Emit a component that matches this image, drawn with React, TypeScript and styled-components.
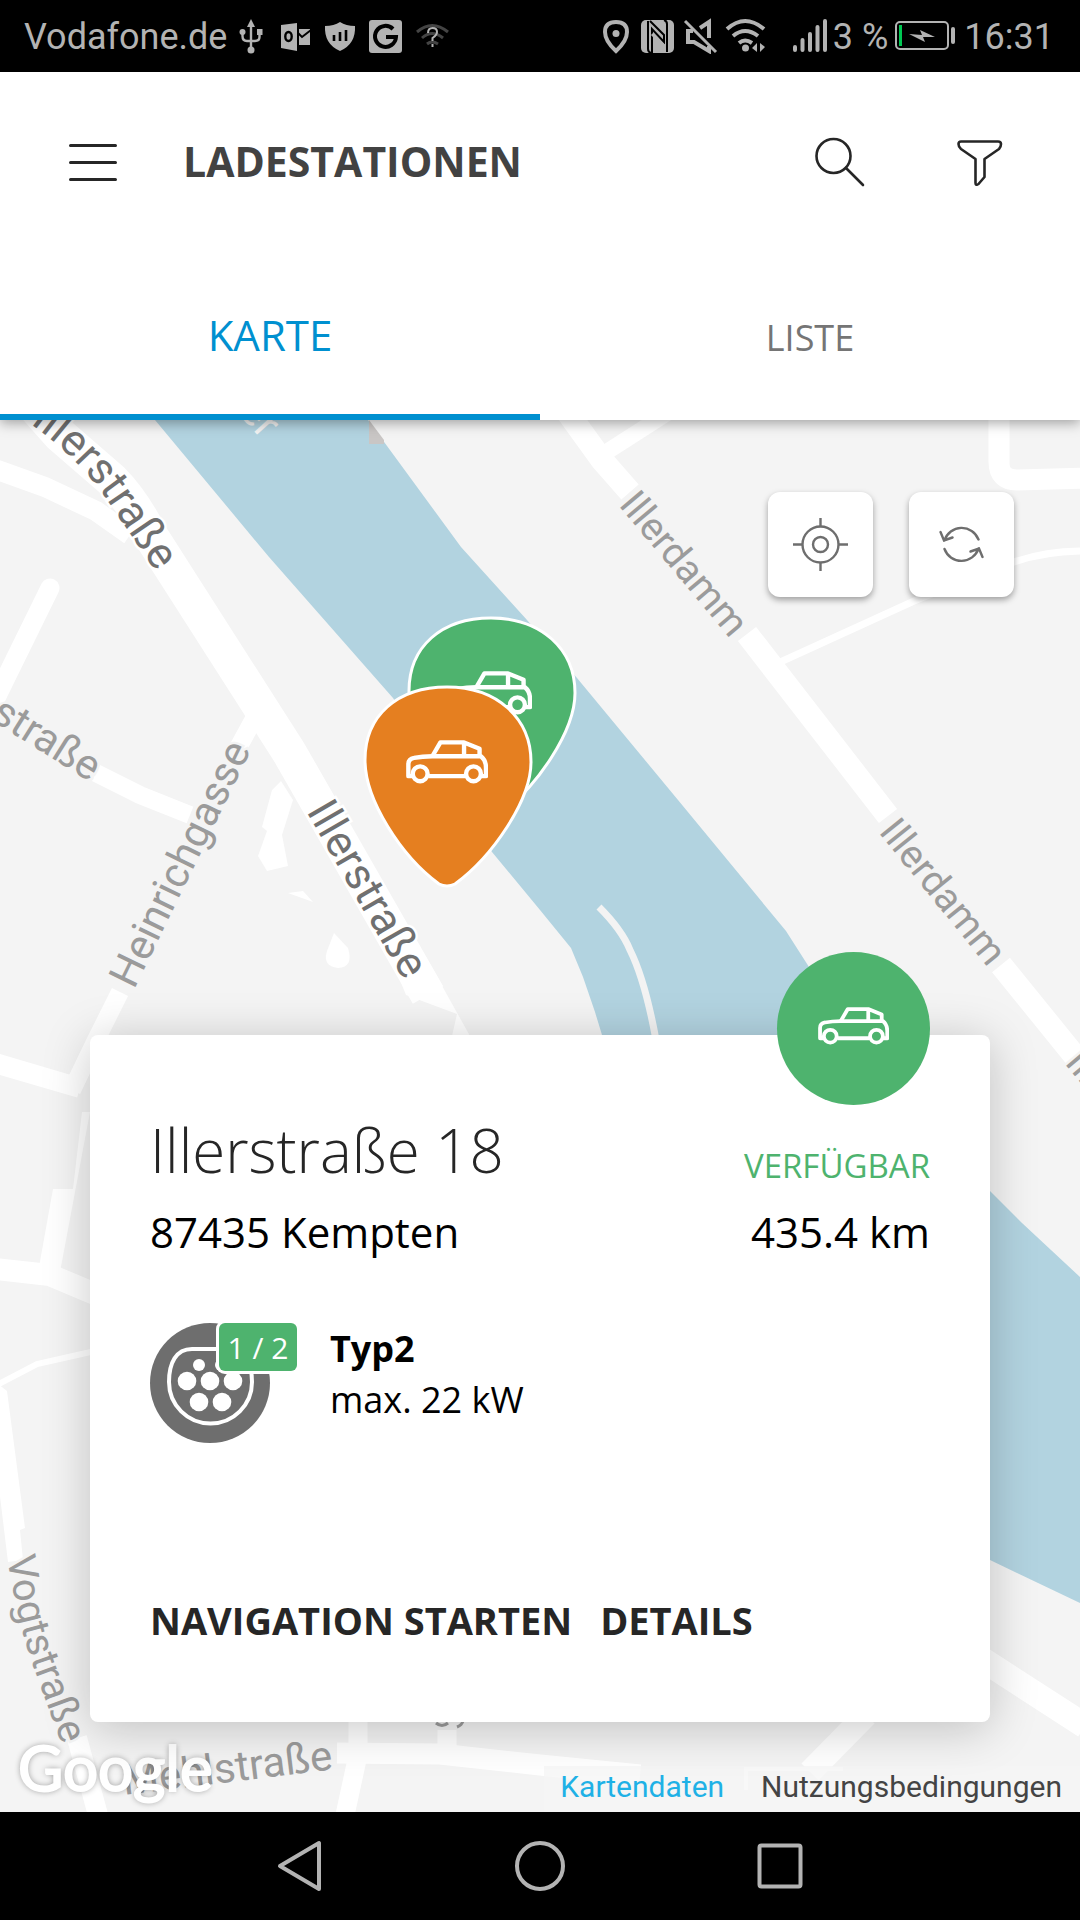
import React from "react";
import styled, { createGlobalStyle } from "styled-components";

const color = {
  accent: "#0090d0",
  available: "#4eb36e",
  occupied: "#e57f20",
  ink: "#262626",
  title: "#424242",
  muted: "#757575",
  system: "#b3b3b3",
  land: "#f4f4f4",
  water: "#b2d3e0",
};

const sans = `"Open Sans", "Noto Sans", sans-serif`;
const roboto = `Roboto, "Noto Sans", sans-serif`;

const GlobalStyle = createGlobalStyle`
  *, *::before, *::after { box-sizing: border-box; }
  body { margin: 0; background: #000; font-family: ${sans}; }
  button { margin: 0; padding: 0; border: 0; background: none; font: inherit; color: inherit; cursor: pointer; }
  h1, h2, p { margin: 0; }
  svg { display: block; }
`;

const Screen = styled.div`
  display: flex;
  flex-direction: column;
  min-height: 100vh;
`;

/* ---------- system bars ---------- */

const StatusBar = styled.div`
  display: flex;
  justify-content: space-between;
  align-items: center;
  height: 72px;
  padding: 0 26px 0 24px;
  background: #000;
  color: ${color.system};
  font-family: ${roboto};
`;

const StatusGroup = styled.div<{ $gap: number }>`
  display: flex;
  align-items: center;
  gap: ${(p) => p.$gap}px;
`;

const StatusText = styled.span`
  padding-top: 2px;
  font-size: 36px;
  line-height: 48px;
`;

const NavBar = styled.nav`
  display: flex;
  justify-content: center;
  align-items: center;
  gap: 180px;
  height: 108px;
  background: #000;
`;

/* ---------- app header ---------- */

const Header = styled.header`
  position: relative;
  z-index: 2;
  background: #fff;
  box-shadow: 0 3px 12px rgba(0, 0, 0, 0.35);
`;

const Toolbar = styled.div`
  display: flex;
  align-items: center;
  height: 180px;
  padding: 0 76px 0 69px;
`;

const PageTitle = styled.h1`
  flex: 1;
  margin-left: 66px;
  padding-bottom: 2px;
  color: ${color.title};
  font-size: 41px;
  font-weight: 700;
  line-height: 60px;
`;

const ToolbarActions = styled.div`
  display: flex;
  gap: 92px;
`;

const Tabs = styled.div`
  display: grid;
  grid-template-columns: 1fr 1fr;
  height: 168px;
`;

const Tab = styled.button<{ $active?: boolean }>`
  padding: ${(p) => (p.$active ? "0 0 3px" : "2px 0 0")};
  color: ${(p) => (p.$active ? color.accent : color.muted)};
  font-size: ${(p) => (p.$active ? 42 : 36)}px;
  box-shadow: ${(p) => (p.$active ? `inset 0 -6px ${color.accent}` : "none")};
`;

/* ---------- map ---------- */

const MapArea = styled.main`
  position: relative;
  flex: 1;
  display: flex;
  flex-direction: column;
  justify-content: space-between;
  overflow: hidden;
  background: ${color.land};
`;

const MapDrawing = styled.svg`
  position: absolute;
  inset: 0;
  width: 100%;
  height: 100%;
  font-family: ${roboto};
`;

const Pin = styled.button<{ $x: number; $y: number }>`
  position: absolute;
  left: ${(p) => p.$x}px;
  top: ${(p) => p.$y}px;
`;

const MapControls = styled.div`
  position: relative;
  display: flex;
  justify-content: flex-end;
  gap: 36px;
  padding: 72px 66px;
`;

const MapButton = styled.button`
  display: grid;
  place-items: center;
  width: 105px;
  height: 105px;
  border-radius: 12px;
  background: #fff;
  box-shadow: 0 3px 6px rgba(0, 0, 0, 0.35);
`;

const MapFooter = styled.footer`
  position: absolute;
  left: 0;
  right: 0;
  bottom: 0;
  display: flex;
  justify-content: space-between;
  align-items: flex-end;
  padding-left: 18px;
  font-family: ${roboto};
`;

const GoogleMark = styled.span`
  color: #fff;
  font-family: Lato, sans-serif;
  font-size: 62px;
  line-height: 90px;
  -webkit-text-stroke: 2px #fff;
  text-shadow: 0 0 6px rgba(0, 0, 0, 0.45);
`;

const Attribution = styled.div`
  display: flex;
  gap: 37px;
  padding: 0 18px 4px 16px;
  background: rgba(245, 245, 245, 0.75);
`;

const AttributionLink = styled.a<{ $highlight?: boolean }>`
  color: ${(p) => (p.$highlight ? "#1fb1e6" : "#444")};
  font-size: 30px;
  line-height: 42px;
  text-decoration: none;
`;

/* ---------- station card ---------- */

const Card = styled.section`
  position: relative;
  margin: 0 90px 90px;
  padding: 75px 60px 78px;
  border-radius: 8px;
  background: #fff;
  box-shadow: 0 6px 48px rgba(0, 0, 0, 0.22);
`;

const CardBadge = styled.div`
  position: absolute;
  top: -83px;
  right: 60px;
  display: grid;
  place-items: center;
  width: 153px;
  height: 153px;
  padding-bottom: 6px;
  border-radius: 50%;
  background: ${color.available};
`;

const Summary = styled.div`
  display: flex;
  justify-content: space-between;
  align-items: flex-end;
`;

const SummaryColumn = styled.div<{ $end?: boolean }>`
  display: flex;
  flex-direction: column;
  gap: 12px;
  text-align: ${(p) => (p.$end ? "right" : "left")};
`;

const Street = styled.h2`
  color: ${color.ink};
  font-size: 60px;
  font-weight: 300;
  line-height: 80px;
`;

const Detail = styled.p`
  color: #000;
  font-size: 42px;
  line-height: 60px;
`;

const Availability = styled.p`
  color: ${color.available};
  font-size: 33px;
  line-height: 48px;
`;

const Connector = styled.div`
  display: flex;
  gap: 60px;
  margin-top: 61px;
`;

const ConnectorIcon = styled.div`
  position: relative;
  width: 120px;
  height: 120px;
`;

const ConnectorCount = styled.span`
  position: absolute;
  top: 0;
  left: 69px;
  width: 78px;
  height: 48px;
  border-radius: 6px;
  background: ${color.available};
  box-shadow: 0 0 0 3px #fff;
  color: #fff;
  font-size: 30px;
  line-height: 49px;
  text-align: center;
  white-space: nowrap;
`;

const ConnectorText = styled.p<{ $strong?: boolean }>`
  color: #000;
  font-size: 36px;
  font-weight: ${(p) => (p.$strong ? 700 : 400)};
  line-height: 51px;
`;

const CardActions = styled.div`
  display: flex;
  gap: 28px;
  margin-top: 153px;
`;

const CardAction = styled.button`
  color: ${color.ink};
  font-size: 38px;
  font-weight: 700;
  line-height: 48px;
`;

/* ---------- icons ---------- */

const CarIcon = ({ width }: { width: number }) => (
  <svg
    width={width}
    height={Math.round((width * 130) / 243)}
    viewBox="0 0 243 130"
    fill="none"
    stroke="#fff"
    strokeWidth="13"
    strokeLinejoin="round"
  >
    <path d="M22 107H7V72Q7 56 24 53Q48 48 78 48H222Q237 60 237 82V107H222" />
    <path d="M66 107H176M78 48L102 7H172L218 26V48M172 7V48" />
    <circle cx="42" cy="100" r="22" />
    <circle cx="200" cy="100" r="22" />
  </svg>
);

const PinShape = ({ fill }: { fill: string }) => (
  <svg width="168" height="201" viewBox="0 0 168 201" overflow="visible">
    <path
      d="M83 1C133 1 167 32 167 76C167 114 129 170 91 198Q83 202 75 198C37 170 1 114 1 74C1 30 33 1 83 1Z"
      fill={fill}
      stroke="#fff"
      strokeWidth="3"
    />
    <svg x="42" y="54" width="82" height="44" overflow="visible">
      <CarIcon width={82} />
    </svg>
  </svg>
);

const MenuIcon = () => (
  <svg width="48" height="48" viewBox="0 0 48 48" stroke={color.ink} strokeWidth="3" strokeLinecap="round">
    <path d="M1.500 7.500H46.500M1.500 24.500H46.500M1.500 41.500H46.500" />
  </svg>
);

const SearchIcon = () => (
  <svg width="48" height="48" viewBox="0 0 48 48" fill="none" stroke={color.ink} strokeWidth="2.600" strokeLinecap="round" overflow="visible">
    <circle cx="17.500" cy="18" r="17" />
    <path d="M30 30L47 47" />
  </svg>
);

const FilterIcon = () => (
  <svg width="48" height="48" viewBox="0 0 48 48" fill="none" stroke={color.ink} strokeWidth="2.600" strokeLinejoin="round">
    <path d="M5 3.500H42Q45 3.500 45 6Q45 9 43 11L28.500 21V39L22.500 46Q19.500 48 19.500 45V21L5 11Q2.500 9 2.500 6Q2.500 3.500 5 3.500Z" />
  </svg>
);

const LocateIcon = () => (
  <svg width="57" height="57" viewBox="0 0 57 57" fill="none" stroke="#6e6e6e" strokeWidth="2.400">
    <circle cx="28.500" cy="28.500" r="18" />
    <circle cx="28.500" cy="28.500" r="7.500" />
    <path d="M28.500 2V11M28.500 46V55M1 28.500H10M47 28.500H56" />
  </svg>
);

const RefreshIcon = () => (
  <svg width="45" height="45" viewBox="0 0 45 45" fill="none" stroke="#6e6e6e" strokeWidth="2.400" strokeLinecap="round">
    <path d="M5.500 18.500A18 18 0 0 1 39.500 17.500M1.500 10L5 18.500L13.500 15.500" />
    <path d="M5.500 27A18 18 0 0 0 39.500 26.500M43.500 35L40 26.500L31.500 29.500" />
  </svg>
);

const PlugIcon = () => (
  <svg width="120" height="120" viewBox="0 0 120 120">
    <circle cx="60" cy="60" r="60" fill="#6e6e6e" />
    <path
      d="M42 26H78C94 26 102 40 102 59A41.500 41.500 0 0 1 19 59C19 40 26 26 42 26Z"
      fill="none"
      stroke="#fff"
      strokeWidth="4"
    />
    <g fill="#fff">
      <circle cx="49" cy="42" r="6" />
      <circle cx="71" cy="42" r="6" />
      <circle cx="37" cy="58" r="9.300" />
      <circle cx="60" cy="58" r="9.300" />
      <circle cx="83" cy="58" r="9.300" />
      <circle cx="49" cy="79" r="9.300" />
      <circle cx="72" cy="79" r="9.300" />
    </g>
  </svg>
);

type StatusIconProps = { width: number; children: React.ReactNode };

const StatusIcon = ({ width, children }: StatusIconProps) => (
  <svg width={width} height="36" viewBox={`0 0 ${width} 36`} fill={color.system}>
    {children}
  </svg>
);

const UsbIcon = () => (
  <StatusIcon width={24}>
    <path d="M12 1L16 9H8Z" />
    <circle cx="12" cy="32" r="3.500" />
    <circle cx="3.500" cy="14" r="3" />
    <rect x="18" y="11" width="5.500" height="6" />
    <path d="M12 8V30M3.500 14V18Q3.500 23 8 23H16Q20.500 23 20.500 19V15" fill="none" stroke={color.system} strokeWidth="2.400" />
  </StatusIcon>
);

const OutlookIcon = () => (
  <StatusIcon width={36}>
    <path d="M6 7L22 5V33L6 30Z" />
    <path d="M24 11H35V27H24Z" />
    <path d="M23 15L27 19L36 12" fill="none" stroke="#000" strokeWidth="2" />
    <ellipse cx="13.500" cy="18.500" rx="3.200" ry="4.500" fill="none" stroke="#000" strokeWidth="2.400" />
  </StatusIcon>
);

const ShieldIcon = () => (
  <StatusIcon width={33}>
    <path d="M17 4Q23 8 32 8Q33 26 17 33Q1 26 2 8Q11 8 17 4Z" />
    <path d="M11 17V23M17 14V23M23 12V23" stroke="#000" strokeWidth="2.600" />
  </StatusIcon>
);

const GBoxIcon = () => (
  <StatusIcon width={36}>
    <rect x="1" y="2" width="33" height="33" rx="3" />
    <path d="M25 11A10.500 10.500 0 1 0 28 19H18" fill="none" stroke="#000" strokeWidth="4" />
  </StatusIcon>
);

const WifiUnknownIcon = () => (
  <StatusIcon width={36}>
    <g fill="none" stroke="#444" strokeWidth="3">
      <path d="M1 14Q16 1 32 14M6 20Q16 11 27 20M11 26Q16 22 22 26" />
    </g>
    <path d="M12 15Q12 10 16.500 10Q21 10 21 14Q21 17 16.500 20V23M16.500 26V29" fill="none" stroke={color.system} strokeWidth="2" />
  </StatusIcon>
);

const PlaceIcon = () => (
  <StatusIcon width={30}>
    <path d="M14 4Q25 4 25 14Q25 23 14 33Q3 23 3 14Q3 4 14 4Z" fill="none" stroke={color.system} strokeWidth="4" />
    <circle cx="14" cy="15.500" r="3.500" />
  </StatusIcon>
);

const NfcIcon = () => (
  <StatusIcon width={39}>
    <rect x="3" y="2" width="33" height="33" rx="5" />
    <path d="M10 3V31Q10 34 13 35M12 3L26 17V24L14 11V35M29 34V6Q29 3 26 2" fill="none" stroke="#000" strokeWidth="2" />
    <path d="M14 16L27 29" fill="none" stroke={color.system} strokeWidth="3" />
  </StatusIcon>
);

const MuteIcon = () => (
  <StatusIcon width={36}>
    <path d="M10 13H5V24H11L26 33V28M17 10L26 4V20" fill="none" stroke={color.system} strokeWidth="4" />
    <path d="M2 3L33 34" stroke={color.system} strokeWidth="3" />
  </StatusIcon>
);

const WifiIcon = () => (
  <StatusIcon width={60}>
    <path d="M2 11Q20 -5 39 11M8 18Q20 8 33 18M14 25Q20 20 27 25" fill="none" stroke={color.system} strokeWidth="4" />
    <circle cx="20.500" cy="30" r="3.500" />
    <path d="M32 25V34L27 30ZM35 25V34L40 29Z" />
  </StatusIcon>
);

const SignalIcon = () => (
  <StatusIcon width={36}>
    <path d="M4 29V32M11.500 22V32M19 16V32M26.500 9V32M34 3V32" stroke={color.system} strokeWidth="4" strokeLinecap="round" />
  </StatusIcon>
);

const BatteryIcon = () => (
  <StatusIcon width={64}>
    <rect x="2" y="4" width="52" height="27" rx="4" fill="none" stroke={color.system} strokeWidth="2" />
    <rect x="5" y="7" width="3" height="21" fill="#00c853" />
    <rect x="57" y="9" width="4" height="17" rx="2" />
    <path d="M15 16L28 17L26 12L41 19L29 19L31 24Z" />
  </StatusIcon>
);

/* ---------- map drawing ---------- */

const CityMap = () => (
  <MapDrawing viewBox="0 420 1080 1392" preserveAspectRatio="xMidYMin slice" aria-hidden="true">
    <defs>
      <path id="illerstrasse-north" d="M-20 386L36 428Q75 456 103 494L156 572" />
      <path id="vogtstrasse" d="M7 1557Q18 1625 36 1674L66 1756" />
    </defs>

    <path
      fill={color.water}
      d="M155 420L269 557L393 698L492 852L540 910L571 948L583 977L595 1012L602 1035L700 1300L990 1560L1080 1603V1277L1022 1223L990 1191L809 967L786 931L678 800L577 678L527 620L461 547L368 420Z"
    />
    <path d="M369 420L384 440V444H369Z" fill="#c9c6c5" />
    <path d="M599 907Q622 930 630 950Q645 980 656 1040" fill="none" stroke="#f3f3f3" strokeWidth="7" />

    <g fill="none" stroke="#fff">
      <path d="M20 390L60 435L112 480Q132 500 149 533L289 752L428 995" strokeWidth="35" />
      <path d="M-5 469L45 487L96 511L130 535" strokeWidth="20" />
      <path d="M50 588L-5 700" strokeWidth="19" strokeLinecap="round" />
      <path d="M96 773L140 795L190 815" strokeWidth="18" />
      <path d="M256 715L238 748M120 992L95 1042L72 1090" strokeWidth="18" />
      <path d="M560 402L602 460L630 492M747 634L888 816M1001 965L1078 1060" strokeWidth="23" />
      <path d="M605 453L672 410" strokeWidth="16" />
      <path d="M776 664L914 601L1014 562Q1046 551 1085 551" strokeWidth="7" />
      <path d="M999 410V462Q999 480 1017 480L1085 478" strokeWidth="21" />
      <path d="M-5 1063L80 1088" strokeWidth="20" />
      <path d="M-5 1269L50 1275L95 1294" strokeWidth="22" />
      <path d="M-5 1386L37 1364L95 1351" strokeWidth="6" />
      <path d="M77 1738L98 1815" strokeWidth="20" />
      <path d="M337 1753L440 1754L540 1765L640 1775" strokeWidth="21" />
      <path d="M358 1715V1755L345 1815M447 1730V1750" strokeWidth="19" />
      <path d="M866 1715L810 1772" strokeWidth="24" />
      <path d="M746 1790V1769H843" strokeWidth="4" />
      <path d="M980 1658L1085 1726" strokeWidth="25" />
    </g>
    <g fill="#fff">
      <path d="M281 781L293 800L282 835L288 866L267 871L258 856L267 831L262 827L272 790Z" />
      <path d="M288 893L303 891L313 902Z" />
      <path d="M334 933L348 948Q354 967 338 968Q322 966 327 951Z" />
      <path d="M400 980L406 995L457 1014L452 1036H470L436 975Z" />
      <path d="M53 1189H73L82 1112H90L60 1272L39 1267Z" />
      <path d="M-2 1384L7 1391L25 1528L20 1530L23 1560L8 1562L-2 1480Z" />
    </g>

    <g fill="#707070" stroke="#fff" strokeWidth="5" paintOrder="stroke" fontSize="44">
      <text textAnchor="end">
        <textPath href="#illerstrasse-north" startOffset="100%">Illerstraße</textPath>
      </text>
      <text transform="translate(306 811) rotate(60)">Illerstraße</text>
    </g>
    <g fill="#9b9b9b" stroke={color.land} strokeWidth="5" paintOrder="stroke" fontSize="42">
      <text transform="translate(90 782) rotate(32)" textAnchor="end">straße</text>
      <text transform="translate(134 990) rotate(-64)">Heinrichgasse</text>
      <text transform="translate(618 505) rotate(50)" fontSize="39">Illerdamm</text>
      <text transform="translate(878 832) rotate(51)" fontSize="39">Illerdamm</text>
      <text transform="translate(1064 1063) rotate(50)" fontSize="39">Illerdamm</text>
      <text fontSize="40">
        <textPath href="#vogtstrasse">Vogtstraße</textPath>
      </text>
      <text transform="translate(124 1795) rotate(-7)">Mehlstraße</text>
    </g>
    <text transform="translate(262 440) rotate(48)" fill="#f3f3f3" fontSize="42" textAnchor="end">Iller</text>
    <path d="M436 1723Q442 1728 448 1723M457 1727Q462 1725 463 1721" fill="none" stroke="#9b9b9b" strokeWidth="3" />
  </MapDrawing>
);

/* ---------- screen ---------- */

export default function App() {
  return (
    <Screen>
      <GlobalStyle />
      <StatusBar>
        <StatusGroup $gap={12}>
          <StatusText>Vodafone.de</StatusText>
          <UsbIcon />
          <OutlookIcon />
          <ShieldIcon />
          <GBoxIcon />
          <WifiUnknownIcon />
        </StatusGroup>
        <StatusGroup $gap={6}>
          <PlaceIcon />
          <NfcIcon />
          <MuteIcon />
          <WifiIcon />
          <SignalIcon />
          <StatusText>3 %</StatusText>
          <BatteryIcon />
          <StatusText>16:31</StatusText>
        </StatusGroup>
      </StatusBar>

      <Header>
        <Toolbar>
          <button aria-label="Menü"><MenuIcon /></button>
          <PageTitle>LADESTATIONEN</PageTitle>
          <ToolbarActions>
            <button aria-label="Suchen"><SearchIcon /></button>
            <button aria-label="Filtern"><FilterIcon /></button>
          </ToolbarActions>
        </Toolbar>
        <Tabs role="tablist">
          <Tab role="tab" aria-selected="true" $active>KARTE</Tab>
          <Tab role="tab" aria-selected="false">LISTE</Tab>
        </Tabs>
      </Header>

      <MapArea>
        <CityMap />
        <Pin $x={408} $y={197} aria-label="Freie Ladestation">
          <PinShape fill={color.available} />
        </Pin>
        <Pin $x={364} $y={266} aria-label="Belegte Ladestation">
          <PinShape fill={color.occupied} />
        </Pin>
        <MapControls>
          <MapButton aria-label="Mein Standort"><LocateIcon /></MapButton>
          <MapButton aria-label="Aktualisieren"><RefreshIcon /></MapButton>
        </MapControls>

        <MapFooter>
          <GoogleMark>Google</GoogleMark>
          <Attribution>
            <AttributionLink href="#kartendaten" $highlight>Kartendaten</AttributionLink>
            <AttributionLink href="#nutzungsbedingungen">Nutzungsbedingungen</AttributionLink>
          </Attribution>
        </MapFooter>

        <Card>
          <CardBadge><CarIcon width={71} /></CardBadge>
          <Summary>
            <SummaryColumn>
              <Street>Illerstraße 18</Street>
              <Detail>87435 Kempten</Detail>
            </SummaryColumn>
            <SummaryColumn $end>
              <Availability>VERFÜGBAR</Availability>
              <Detail>435.4 km</Detail>
            </SummaryColumn>
          </Summary>
          <Connector>
            <ConnectorIcon>
              <PlugIcon />
              <ConnectorCount>1 / 2</ConnectorCount>
            </ConnectorIcon>
            <div>
              <ConnectorText $strong>Typ2</ConnectorText>
              <ConnectorText>max. 22 kW</ConnectorText>
            </div>
          </Connector>
          <CardActions>
            <CardAction>NAVIGATION STARTEN</CardAction>
            <CardAction>DETAILS</CardAction>
          </CardActions>
        </Card>
      </MapArea>

      <NavBar>
        <button aria-label="Zurück">
          <svg width="60" height="60" viewBox="0 0 60 60" fill="none" stroke={color.system} strokeWidth="4" strokeLinejoin="round">
            <path d="M49 7V53L10 30Z" />
          </svg>
        </button>
        <button aria-label="Startbildschirm">
          <svg width="60" height="60" viewBox="0 0 60 60" fill="none" stroke={color.system} strokeWidth="4">
            <circle cx="30" cy="30" r="23" />
          </svg>
        </button>
        <button aria-label="Letzte Apps">
          <svg width="60" height="60" viewBox="0 0 60 60" fill="none" stroke={color.system} strokeWidth="4">
            <rect x="9.500" y="9.500" width="41" height="41" rx="2" />
          </svg>
        </button>
      </NavBar>
    </Screen>
  );
}
